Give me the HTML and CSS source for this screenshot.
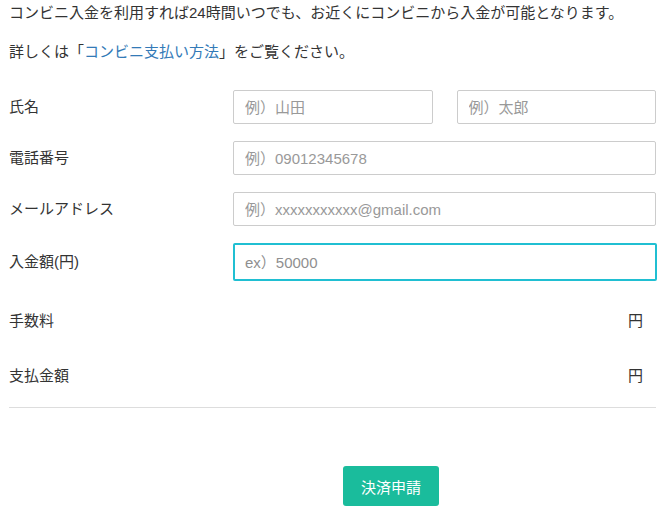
FILE: index.html
```html
<!DOCTYPE html>
<html lang="ja">
<head>
<meta charset="utf-8">
<title>コンビニ入金</title>
<link rel="stylesheet" href="styles.css">
</head>
<body>
<div class="page">
  <p class="intro">コンビニ入金を利用すれば24時間いつでも、お近くにコンビニから入金が可能となります。</p>
  <p class="intro second">詳しくは「<a class="link" href="#">コンビニ支払い方法</a>」をご覧ください。</p>

  <form class="form">
    <div class="row">
      <label class="label">氏名</label>
      <div class="fields split">
        <input class="input" type="text" placeholder="例）山田">
        <input class="input" type="text" placeholder="例）太郎">
      </div>
    </div>
    <div class="row">
      <label class="label">電話番号</label>
      <div class="fields">
        <input class="input" type="text" placeholder="例）09012345678">
      </div>
    </div>
    <div class="row">
      <label class="label">メールアドレス</label>
      <div class="fields">
        <input class="input" type="text" placeholder="例）xxxxxxxxxxx@gmail.com">
      </div>
    </div>
    <div class="row">
      <label class="label">入金額(円)</label>
      <div class="fields">
        <input class="input focused" type="text" placeholder="ex）50000">
      </div>
    </div>
    <div class="row info first-info">
      <span class="label">手数料</span>
      <span class="value">円</span>
    </div>
    <div class="row info">
      <span class="label">支払金額</span>
      <span class="value">円</span>
    </div>
    <hr class="rule">
    <div class="actions">
      <button class="submit" type="button">決済申請</button>
    </div>
  </form>
</div>
</body>
</html>
```

FILE: styles.css
```css
html, body {
  margin: 0;
  padding: 0;
  background: #ffffff;
}

body {
  font-family: "Liberation Sans", "Noto Sans CJK JP", sans-serif;
  font-size: 15px;
  color: #333333;
}

.page {
  padding: 2px 0 0 9px;
  width: 647px;
}

.intro {
  margin: 0;
  line-height: 22px;
}

.intro.second {
  margin-top: 17px;
}

.link {
  color: #337ab7;
  text-decoration: none;
}

.form {
  margin: 27px 0 0 0;
}

.row {
  display: grid;
  grid-template-columns: 224px minmax(0, 1fr);
  align-items: center;
  margin-bottom: 17px;
}

.label {
  line-height: 22px;
}

.fields {
  display: flex;
  min-width: 0;
}

.fields.split {
  gap: 24px;
}

.input {
  flex: 1 1 0;
  width: 0;
  min-width: 0;
  box-sizing: border-box;
  height: 34px;
  border: 1px solid #cccccc;
  border-radius: 2px;
  padding: 0 11px;
  font-family: "Liberation Sans", "Noto Sans CJK JP", sans-serif;
  font-size: 15px;
  color: #333333;
  background: #ffffff;
  outline: none;
}

.input::placeholder {
  color: #999999;
}

.input.focused {
  height: 38px;
  border: 2px solid #20bfd2;
  margin-right: -1px;
  padding: 0 10px;
}

.input.focused::placeholder {
  color: #8f8f8f;
}

.row.info {
  height: 34px;
  margin-bottom: 21px;
}

.row.first-info {
  margin-top: 23px;
}

.row.info:last-of-type {
  margin-bottom: 0;
}

.value {
  text-align: right;
  padding-right: 13px;
  line-height: 22px;
}

.rule {
  border: 0;
  border-top: 1px solid #dddddd;
  margin: -7px 0 0 0;
  height: 0;
}

.actions {
  display: flex;
  padding: 58px 0 0 334px;
}

.submit {
  width: 96px;
  height: 40px;
  border: 0;
  border-radius: 3px;
  background: #1abc9c;
  color: #ffffff;
  font-family: "Liberation Sans", "Noto Sans CJK JP", sans-serif;
  font-size: 15px;
  padding: 0;
}
```
